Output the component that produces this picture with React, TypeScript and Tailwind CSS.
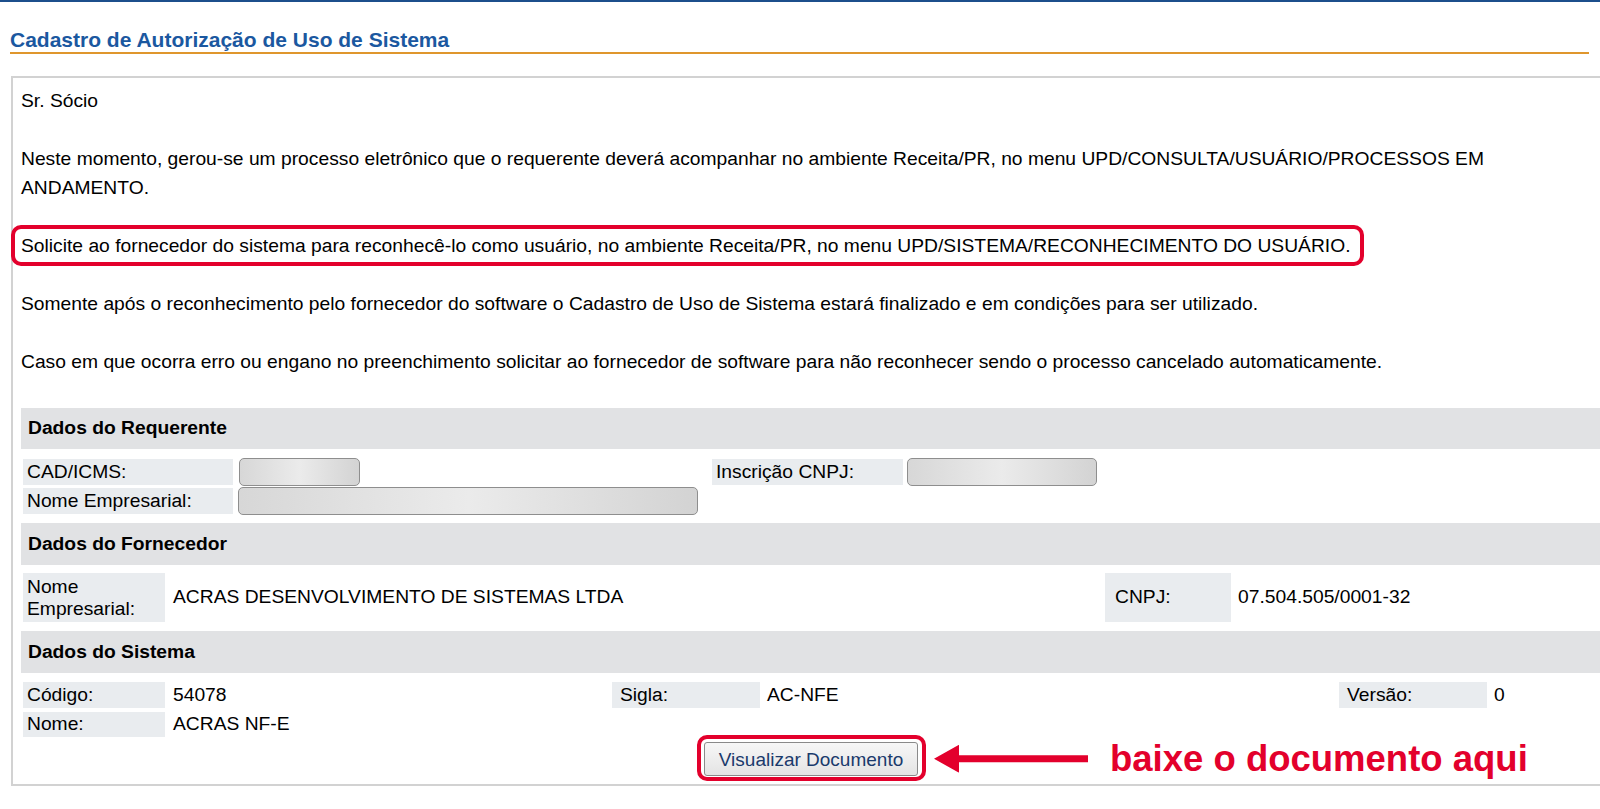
import React from "react";

function Label({ w, children, className = "" }: { w: string; children: React.ReactNode; className?: string }) {
  return (
    <div className={`${w} shrink-0 bg-[#e9ecef] pl-[4px] flex items-center ${className}`}>{children}</div>
  );
}

function BlurInput({ w }: { w: string }) {
  return (
    <div
      className={`${w} h-[28px] -my-[1px] shrink-0 rounded-[5px] border border-[#8e8e8e] bg-gradient-to-r from-[#d7d7d7] via-[#ebebeb] to-[#d3d3d3]`}
    />
  );
}

function SectionHeader({ children, className = "" }: { children: React.ReactNode; className?: string }) {
  return (
    <div className={`bg-[#e1e2e4] pl-[7px] flex items-center font-bold ${className}`}>{children}</div>
  );
}

export default function App() {
  return (
    <div className="w-[1600px] h-[809px] overflow-hidden bg-white font-['Liberation_Sans',Arial,sans-serif] text-black text-[19.25px]">
      <div className="h-[2px] bg-[#1c4f8c]" />
      <div className="ml-[10px] w-[1579px] pt-[26px] border-b-2 border-[#df962d]">
        <h1 className="text-[21px] leading-[24px] font-bold text-[#1b58a0]">
          Cadastro de Autorização de Uso de Sistema
        </h1>
      </div>

      <div className="ml-[11px] mt-[22px] w-[1600px] border-2 border-[#d2d2d2] px-[8px] pt-[8px] pb-[8px]">
        <div className="leading-[29px] pr-[24px]">
          <p>Sr. Sócio</p>
          <p className="mt-[29px]">
            Neste momento, gerou-se um processo eletrônico que o requerente deverá acompanhar no ambiente Receita/PR, no menu UPD/CONSULTA/USUÁRIO/PROCESSOS EM ANDAMENTO.
          </p>
          <p className="mt-[29px]">
            <span className="relative inline-block">
              Solicite ao fornecedor do sistema para reconhecê-lo como usuário, no ambiente Receita/PR, no menu UPD/SISTEMA/RECONHECIMENTO DO USUÁRIO.
              <span className="absolute -left-[10px] -right-[13px] -top-[6px] -bottom-[6px] border-4 border-[#e3002c] rounded-[10px] pointer-events-none" />
            </span>
          </p>
          <p className="mt-[29px]">
            Somente após o reconhecimento pelo fornecedor do software o Cadastro de Uso de Sistema estará finalizado e em condições para ser utilizado.
          </p>
          <p className="mt-[29px]">
            Caso em que ocorra erro ou engano no preenchimento solicitar ao fornecedor de software para não reconhecer sendo o processo cancelado automaticamente.
          </p>
        </div>

        <SectionHeader className="mt-[32px] h-[41px]">Dados do Requerente</SectionHeader>

        <div className="mt-[10px] flex h-[26px]">
          <Label w="w-[210px]" className="ml-[2px]">CAD/ICMS:</Label>
          <div className="ml-[6px]"><BlurInput w="w-[121px]" /></div>
          <Label w="w-[191px]" className="ml-[352px] pl-[3px]">Inscrição CNPJ:</Label>
          <div className="ml-[4px]"><BlurInput w="w-[190px]" /></div>
        </div>
        <div className="mt-[3px] flex h-[26px]">
          <Label w="w-[210px]" className="ml-[2px]">Nome Empresarial:</Label>
          <div className="ml-[5px]"><BlurInput w="w-[460px]" /></div>
        </div>

        <SectionHeader className="mt-[9px] h-[42px]">Dados do Fornecedor</SectionHeader>

        <div className="mt-[8px] flex h-[49px] items-stretch">
          <Label w="w-[142px]" className="ml-[2px] leading-[22px]">Nome Empresarial:</Label>
          <div className="ml-[8px] w-[932px] flex items-center">ACRAS DESENVOLVIMENTO DE SISTEMAS LTDA</div>
          <Label w="w-[126px]" className="pl-[10px]">CNPJ:</Label>
          <div className="ml-[7px] flex items-center">07.504.505/0001-32</div>
        </div>

        <SectionHeader className="mt-[9px] h-[42px]">Dados do Sistema</SectionHeader>

        <div className="mt-[9px] flex h-[26px]">
          <Label w="w-[142px]" className="ml-[2px]">Código:</Label>
          <div className="ml-[8px] w-[439px] flex items-center">54078</div>
          <Label w="w-[148px]" className="pl-[8px]">Sigla:</Label>
          <div className="ml-[7px] w-[572px] flex items-center">AC-NFE</div>
          <Label w="w-[148px]" className="pl-[8px]">Versão:</Label>
          <div className="ml-[7px] flex items-center">0</div>
        </div>
        <div className="mt-[4px] flex h-[25px]">
          <Label w="w-[142px]" className="ml-[2px]">Nome:</Label>
          <div className="ml-[8px] flex items-center">ACRAS NF-E</div>
        </div>

        <div className="mt-[5px] flex justify-center">
          <div className="relative">
            <button className="w-[214px] h-[34px] rounded-[3px] border border-[#8a8a8a] bg-gradient-to-b from-[#f7f7f7] to-[#e4e4e4] text-[#1a3a6c] text-[19px] leading-none">
              Visualizar Documento
            </button>
            <span className="absolute -left-[7px] -right-[8px] -top-[7px] -bottom-[5px] border-4 border-[#e3002c] rounded-[10px] pointer-events-none" />
            <div className="absolute left-[calc(100%+16px)] top-1/2 -translate-y-1/2 flex items-center whitespace-nowrap">
              <svg width="154" height="28" viewBox="0 0 154 28" className="shrink-0">
                <polygon points="0,14 25,0 25,10.5 154,10.5 154,17.5 25,17.5 25,28" fill="#e3002c" />
              </svg>
              <span className="ml-[22px] text-[36.5px] font-bold leading-none text-[#e3002c]">baixe o documento aqui</span>
            </div>
          </div>
        </div>
      </div>
    </div>
  );
}
